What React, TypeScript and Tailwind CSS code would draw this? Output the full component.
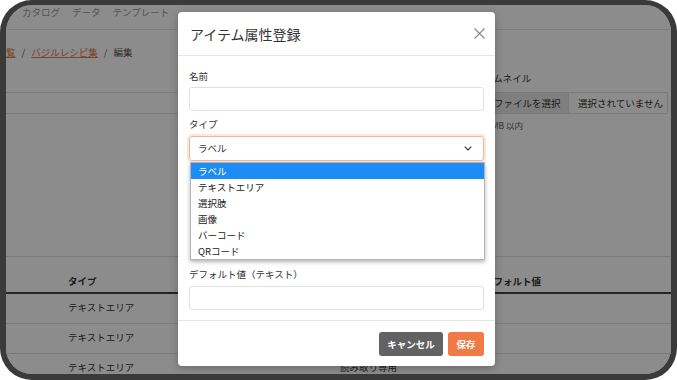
import React from "react";

const typeOptions = ["ラベル", "テキストエリア", "選択肢", "画像", "バーコード", "QRコード"];

const rows = [
  { type: "テキストエリア", mode: "読み取り専用" },
  { type: "テキストエリア", mode: "読み取り専用" },
  { type: "テキストエリア", mode: "読み取り専用" },
];

function PageBehind() {
  return (
    <div className="h-full w-full text-[#333]">
      {/* Top nav */}
      <div className="h-[25px] border-b border-[#e5e5e5] flex gap-[12px] pl-[16px] text-[9.5px] leading-[14px] text-[#999]">
        <span>カタログ</span>
        <span>データ</span>
        <span>テンプレート</span>
      </div>

      {/* Breadcrumb */}
      <div className="mt-[15px] flex items-center gap-[6px] text-[9.5px] leading-[14px] -ml-[9.5px]">
        <span className="text-[#e07b45] underline">一覧</span>
        <span className="text-[#666]">/</span>
        <span className="text-[#e07b45] underline">バジルレシピ集</span>
        <span className="text-[#666]">/</span>
        <span className="text-[#555]">編集</span>
      </div>

      {/* Form row */}
      <div className="mt-[12px] h-[185px] grid grid-cols-[478px_184px]">
        <div>
          <div className="h-[14px]" />
          <div className="mt-[7px] h-[22px] border-y border-[#ddd] -ml-[20px] mr-[10px]" />
        </div>
        <div>
          <div className="h-[14px] text-[9.5px] leading-[14px]">サムネイル</div>
          <div className="mt-[7px] h-[22px] border border-[#ddd] flex text-[9.5px] rounded-[2px] overflow-hidden">
            <div className="w-[84px] bg-[#e8e8e8] border-r border-[#ddd] flex items-center pl-[9px]">ファイルを選択</div>
            <div className="flex items-center pl-[9px]">選択されていません</div>
          </div>
          <div className="mt-[5px] text-[8.5px] leading-[12px] text-[#666] pl-[3px]">5MB 以内</div>
        </div>
      </div>

      {/* Table */}
      <div className="border-t border-[#ddd] text-[9.5px]">
        <div className="h-[37px] border-b-2 border-[#444] grid grid-cols-[62px_272px_144px_1fr] items-end pb-[4px] font-bold leading-[14px]">
          <span />
          <span>タイプ</span>
          <span>属性</span>
          <span>デフォルト値</span>
        </div>
        {rows.map((row, i) => (
          <div key={i} className="h-[30px] border-b border-[#ddd] grid grid-cols-[62px_272px_144px_1fr] pt-[6px] leading-[14px]">
            <span />
            <span>{row.type}</span>
            <span>{row.mode}</span>
            <span />
          </div>
        ))}
      </div>
    </div>
  );
}

function AttributeModal() {
  return (
    <div className="absolute left-[172px] top-[7px] w-[317px] bg-white rounded-[4px] shadow-[0_2px_8px_rgba(0,0,0,0.25)] text-[#333]">
      {/* Header */}
      <div className="h-[44px] border-b border-[#e5e5e5] flex items-center justify-between pl-[12px] pr-[10px]">
        <h2 className="text-[14px] leading-[20px] font-normal">アイテム属性登録</h2>
        <svg width="11" height="11" viewBox="0 0 11 11" className="text-[#888]">
          <path d="M0.5 0.5L10.5 10.5M10.5 0.5L0.5 10.5" stroke="currentColor" strokeWidth="1.1" />
        </svg>
      </div>

      {/* Body */}
      <div className="px-[11px] pt-[13px] pb-[10px] text-[9.5px]">
        <div className="h-[14px] leading-[14px]">名前</div>
        <div className="mt-[4px] h-[24px] border border-[#e0e0e0] rounded-[3px]" />

        <div className="mt-[6px] h-[14px] leading-[14px]">タイプ</div>
        <div className="mt-[5px] h-[25px] border border-[#f3b893] rounded-[3px] shadow-[0_0_0_2px_rgba(240,123,69,0.18)] flex items-center justify-between pl-[8px] pr-[11px]">
          <span>ラベル</span>
          <svg width="8" height="5" viewBox="0 0 8 5">
            <path d="M0.7 0.7L4 4L7.3 0.7" fill="none" stroke="#333" strokeWidth="1.2" />
          </svg>
        </div>

        <div className="mt-[106px] h-[14px] leading-[14px]">デフォルト値（テキスト）</div>
        <div className="mt-[5px] h-[24px] border border-[#e0e0e0] rounded-[3px]" />
      </div>

      {/* Footer */}
      <div className="border-t border-[#e5e5e5] pt-[11px] pb-[10px] pr-[11px] flex justify-end gap-[5px]">
        <button className="w-[64px] h-[24px] rounded-[3px] bg-[#626262] text-white text-[9.5px] font-bold">キャンセル</button>
        <button className="w-[36px] h-[24px] rounded-[3px] bg-[#f07a45] text-white text-[9.5px] font-bold">保存</button>
      </div>

      {/* Open select list */}
      <div className="absolute left-[12px] top-[150px] w-[295px] bg-white border border-[#b5b5b5] shadow-[0_2px_4px_rgba(0,0,0,0.3)] text-[9.5px]">
        {typeOptions.map((opt, i) => (
          <div
            key={opt}
            className={
              i === 0
                ? "h-[16px] leading-[16px] pl-[7px] bg-[#1e8cf5] text-white"
                : "h-[16px] leading-[16px] pl-[7px] text-[#222]"
            }
          >
            {opt}
          </div>
        ))}
      </div>
    </div>
  );
}

export default function App() {
  return (
    <div className="w-[677px] h-[380px] bg-white font-['Noto_Sans_CJK_JP','Noto_Sans',sans-serif]">
      <div className="relative h-full w-full rounded-[32px] border-[#3a3a3a] border-x-[6px] border-t-[5px] border-b-[6px] overflow-hidden bg-white">
        <PageBehind />
        <div className="absolute inset-0 bg-black/45" />
        <AttributeModal />
      </div>
    </div>
  );
}
